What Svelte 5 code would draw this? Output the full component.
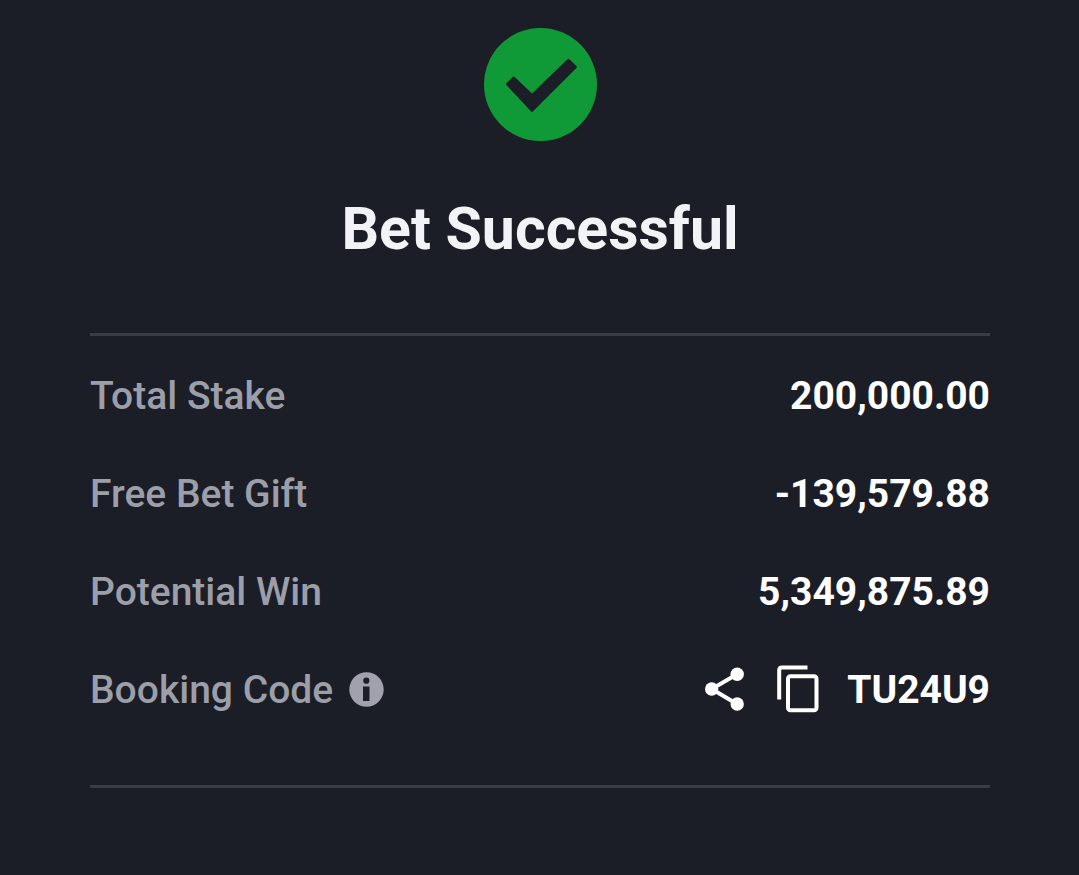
<script>
	const rows = [
		{ label: "Total Stake", value: "200,000.00" },
		{ label: "Free Bet Gift", value: "-139,579.88" },
		{ label: "Potential Win", value: "5,349,875.89" }
	];
	const bookingCode = "TU24U9";

	const copyCode = () => {
		navigator.clipboard?.writeText(bookingCode);
	}

	const shareCode = () => {
		navigator.share?.({ text: bookingCode });
	}
</script>

<main>
	<svg class="check" viewBox="0 0 113 113" aria-hidden="true">
		<circle cx="56.5" cy="56.5" r="56.5" fill="#109a37" />
		<path d="M23.5 56L29.7 50.2L48 67.6L84.5 32.3L91.3 39L48 82.3Z" fill="#1b1e26" stroke="#1b1e26" stroke-width="3" stroke-linejoin="round" />
	</svg>
	<h1>Bet Successful</h1>

	<dl>
		{#each rows as row}
			<div class="row">
				<dt>{row.label}</dt>
				<dd>{row.value}</dd>
			</div>
		{/each}
		<div class="row">
			<dt>
				Booking Code
				<button class="info" aria-label="About booking code">
					<svg width="35" height="35" viewBox="0 0 35 35">
						<circle cx="17.5" cy="17.5" r="17.2" fill="#a0a1ad" />
						<circle cx="17.3" cy="8.7" r="3.1" fill="#1b1e26" />
						<path d="M14 14.5H20.5V29H14Z" fill="#1b1e26" />
					</svg>
				</button>
			</dt>
			<dd>
				<button class="share" aria-label="Share booking code" onclick={shareCode}>
					<svg width="40" height="48" viewBox="0 0 40 48">
						<path d="M32 9.3L6.7 24L32 39" fill="none" stroke="#fff" stroke-width="4" />
						<circle cx="32.2" cy="9.3" r="6.7" fill="#fff" />
						<circle cx="6.7" cy="24" r="6.7" fill="#fff" />
						<circle cx="32.2" cy="39" r="6.7" fill="#fff" />
					</svg>
				</button>
				<button class="copy" aria-label="Copy booking code" onclick={copyCode}>
					<svg width="42" height="48" viewBox="0 0 42 48" fill="none" stroke="#fff" stroke-width="4">
						<path d="M2.2 34.5V5.2Q2.2 2.5 5 2.5H30.5" />
						<rect x="11" y="11.3" width="28.5" height="34" rx="2.5" />
					</svg>
				</button>
				{bookingCode}
			</dd>
		</div>
	</dl>
</main>

<style>
	:global(body) {
		background: #1b1e26;
		font-family: Roboto, "Liberation Sans", sans-serif;
	}
	main {
		display: flex;
		flex-direction: column;
		align-items: center;
		padding: 28px 89px 28px 90px;
	}
	.check {
		width: 113px;
		height: 113px;
	}
	h1 {
		margin: 52px 0 69px;
		color: #f2f3f7;
		font-size: 59px;
		line-height: 71px;
		font-weight: 700;
	}
	dl {
		display: flex;
		flex-direction: column;
		gap: 52px;
		box-sizing: border-box;
		width: 100%;
		margin: 0;
		padding: 37px 0 72px;
		border-top: 3px solid #3a3c45;
		border-bottom: 3px solid #3a3c45;
	}
	.row {
		display: flex;
		justify-content: space-between;
		font-size: 39px;
		line-height: 46px;
	}
	dt {
		display: flex;
		align-items: center;
		gap: 16px;
		color: #9c9eaa;
		font-weight: 500;
	}
	dd {
		display: flex;
		align-items: center;
		height: 46px;
		margin: 0;
		color: #fff;
		font-weight: 700;
	}
	button {
		display: flex;
		padding: 0 0 2px;
		border: none;
		background: none;
		cursor: pointer;
	}
	.share {
		margin-right: 32px;
	}
	.copy {
		margin-right: 28px;
	}
</style>
